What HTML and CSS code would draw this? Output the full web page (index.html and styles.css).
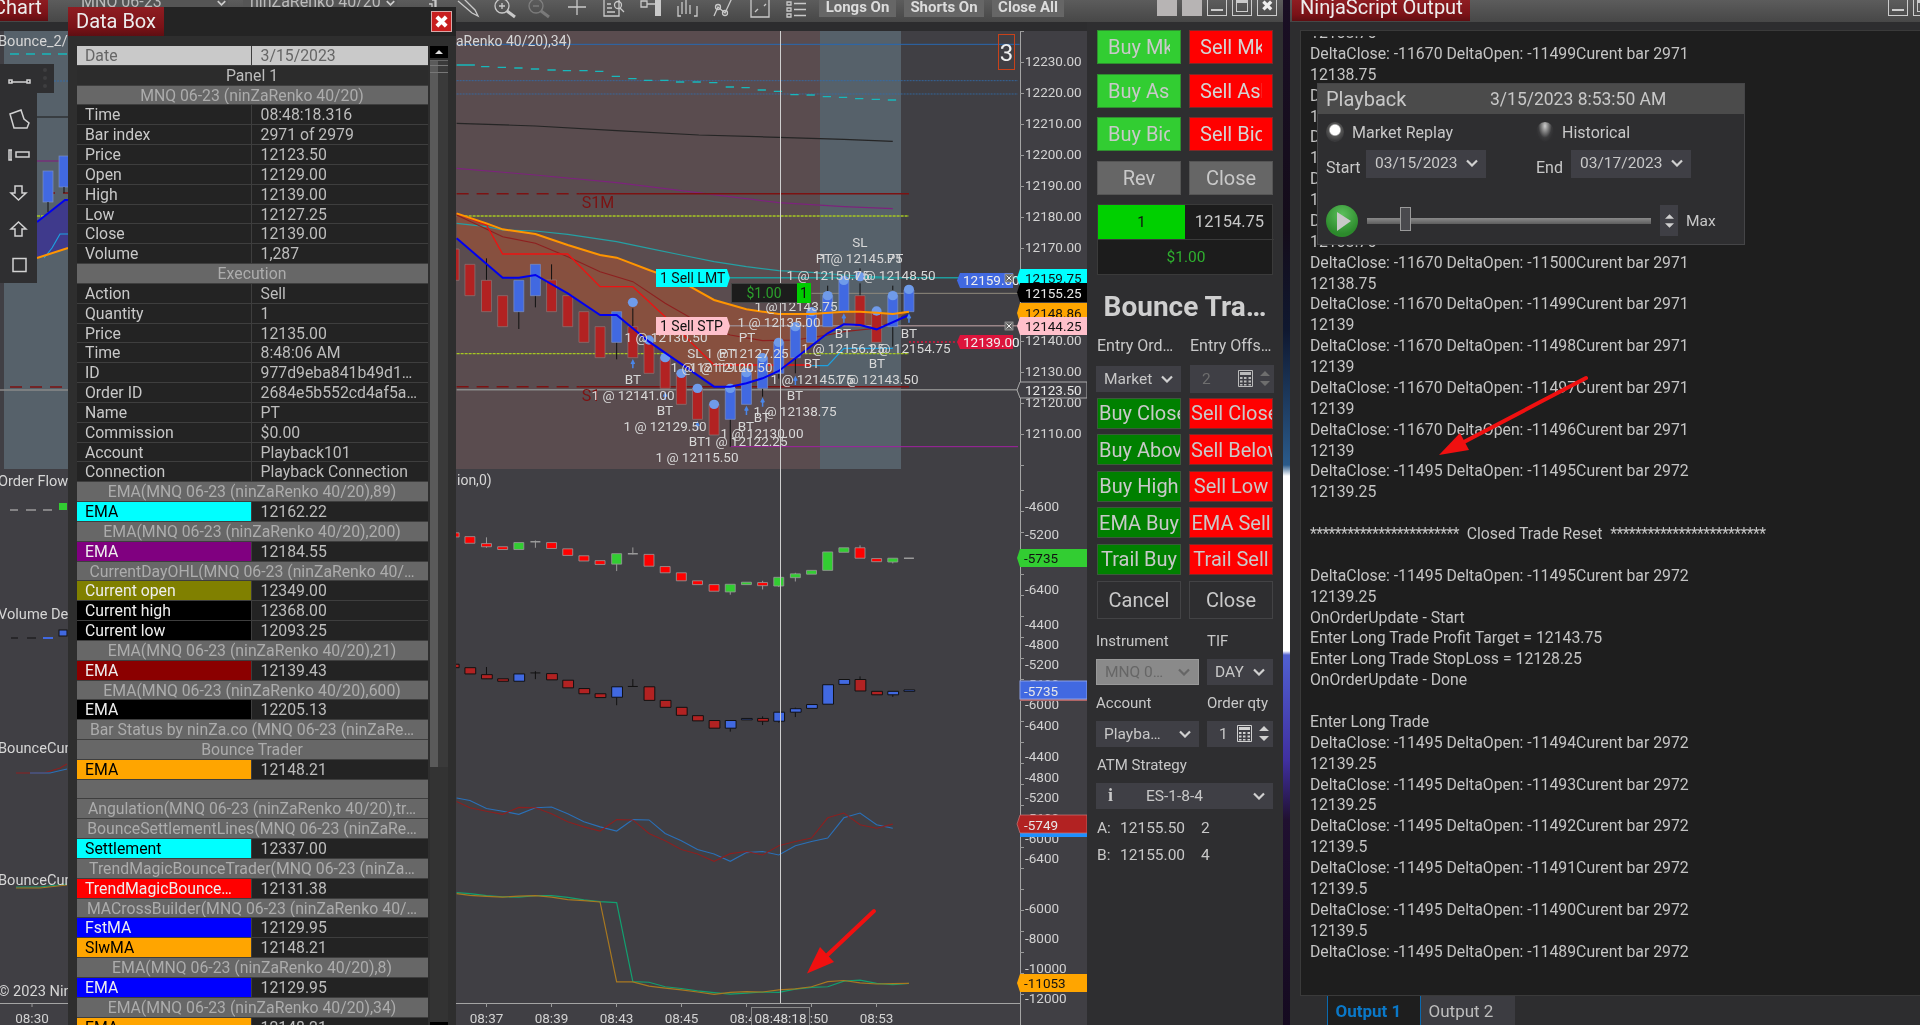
FILE: index.html
```html
<!DOCTYPE html>
<html lang="en">
<head>
<meta charset="utf-8">
<title>NinjaTrader workspace</title>
<link rel="stylesheet" href="styles.css">
</head>
<body>
<svg class="defs" width="0" height="0">
  <symbol id="chev" viewBox="0 0 12 8"><path d="M1 1.5 6 6.5 11 1.5" fill="none" stroke="currentColor" stroke-width="2.2"/></symbol>
  <symbol id="calc" viewBox="0 0 15 17"><path d="M.5.5h14v16H.5z" fill="none" stroke="currentColor"/><path d="M2 2h11v3H2zM2 7h2.5v2H2zM6 7h2.5v2H6zM10.500 7H13v2h-2.500zM2 10.500h2.500v2H2zM6 10.500h2.500v2H6zM10.500 10.500H13v2h-2.500zM2 14h2.500v1.500H2zM6 14h2.500v1.500H6zM10.500 14H13v1.500h-2.500z" fill="currentColor"/></symbol>
  <symbol id="updown" viewBox="0 0 10 17"><path d="M0 6 5 1l5 5zM0 11l5 5 5-5z" fill="currentColor"/></symbol>
</svg>
<div class="desk">
  <section class="win chart-win">
    <header class="titlebar">
      <div class="tab tab-chart"><span>Chart</span></div>
      <div class="tb-sel sel-inst">MNQ 06-23<svg class="tb-chev"><use href="#chev"/></svg></div>
      <div class="tb-sel sel-type">ninZaRenko 40/20<svg class="tb-chev"><use href="#chev"/></svg></div>
      <svg class="tb-icons" viewBox="425 0 390 22">
        <g class="ic">
          <path d="M429 4h3v13h3V0h-3M436 0v17"/>
          <path d="M458 1l14 12 6 3-3-6L462-3"/>
          <circle cx="502" cy="6" r="7"/><path d="M502 3v6M499 6h6"/><path class="ict" d="M507 11l8 6"/>
          <g class="dim"><circle cx="536" cy="6" r="7"/><path d="M533 6h6"/><path class="ict" d="M541 11l8 6"/></g>
          <path d="M577-2v17M568 7h18"/>
          <path d="M604-2h15v18h-15zM607 4h4M607 8h5M607 12h8"/><circle cx="618" cy="5" r="3.500"/><path d="M620 8l4 4"/>
          <path d="M641 1h6v6h-6zM647 4h8"/><path class="fat" d="M658-2v18"/>
          <path d="M678 6v10h3M694 16h3V6M682 14V2M686 14V-2M690 14V5" />
          <path d="M714 16l4-9 7 6 7-15"/><circle cx="718" cy="7" r="2.500"/><circle cx="725" cy="13" r="2.500"/>
          <path d="M751-1h18v18h-18zM755 12l3-3M764 6l2-2"/>
          <path d="M787 2h4v3h-4zM794 3.500h12M787 8h4v3h-4zM794 9.500h12M787 14h4v3h-4zM794 15.500h12"/>
        </g>
      </svg>
      <div class="tb-btn btn-long">Longs On</div>
      <div class="tb-btn btn-short">Shorts On</div>
      <div class="tb-btn btn-close">Close All</div>
      <div class="wc wc-solid first-wc"></div>
      <div class="wc wc-solid"></div>
      <div class="wc wc-min"></div>
      <div class="wc wc-max"></div>
      <div class="wc wc-x">✖</div>
    </header>
    <div class="chart-body">
      <svg class="chart" width="1087" height="1003" viewBox="0 22 1087 1003">
        <rect class="gap" x="0" y="22" width="1087" height="9"/>
        <rect class="zone-s" x="4" y="31" width="64" height="438"/>
        <rect class="zone-b" x="456" y="31" width="364" height="438"/>
        <rect class="zone-s" x="820" y="31" width="81" height="438"/>

        <!-- left fragment of the price panel -->
        <path class="l-cy" d="M10 54H68"/>
        <path class="l-dot" d="M54 81H68"/>
        <path class="l-blk" d="M37 117H68"/>
        <path class="l-pur" d="M37 161H68"/>
        <path class="l-s" d="M43 193H68"/>
        <path class="l-yl" d="M37 216H68"/>
        <path class="l-s" d="M10 387H68"/>
        <path class="l-gr" d="M0 390H68"/>
        <path class="a-fill" d="M37 222L65 200H68V248L37 258z"/>
        <rect class="c-b" x="43" y="171" width="10" height="31"/><rect class="c-b" x="59" y="156" width="10" height="31"/>
        <path class="wick" d="M48 202V212M64 187V193"/>
        <path class="l-blu" d="M37 222L65 200H68"/>
        <path class="l-tl" d="M44 258L52 248 60 234H68"/>
        <path class="l-org" d="M37 258L68 248"/>

        <g class="main" transform="translate(450 0) scale(.41459 .33333)">
          <path class="l-blue" d="M16 133H1374"/>
          <path class="l-dot" d="M16 242H1370M16 282H1370"/>
          <path class="l-cys" d="M16 195H60M75 200H95M115 202H135M155 204H175M195 207H215M235 210H255M272 212H292M312 212H332M350 214H370M390 229H410M430 236H450M468 241H488M507 241H527M545 246H565M585 246H605M625 248H645M665 261H685M703 263H723M742 270H762M781 274H801M821 284H841M860 285H880M899 290H919M938 292H958M977 296H997M1017 298H1037M1056 300H1076"/>
          <path class="l-blk" d="M16 370L206 378 402 392 600 405 793 412 950 418 1068 424"/>
          <path class="l-pur" d="M16 505L206 525 402 548 597 578 793 608 950 620 1068 626"/>
          <path class="l-s" d="M16 581H312"/><path class="l-ss" d="M312 581H1107"/>
          <path class="l-yl" d="M16 648H1107M16 1061H1107"/>
          <path class="a-fill2" d="M16 640L88 670 127 688 206 702 284 735 362 765 402 773 480 810 558 845 637 900 715 928 793 942 872 942 950 935 989 935 1029 938 1107 935 1029 988 989 975 950 973 911 1000 833 1075 793 1113 754 1135 715 1150 676 1160 637 1160 480 1025 402 945 362 945 284 880 206 825 166 833 127 833 16 715z"/>
          <path class="l-tl2" d="M16 670L88 680 127 690 206 693 284 703 402 725 480 745 558 765 637 785 715 800 793 812 872 817 950 825 1068 833"/>
          <path class="l-dr" d="M16 645L127 710 206 730 284 770 362 815 441 845 519 910 597 965 676 1005 754 1022 833 1020 911 1005 950 995 1029 985 1107 945"/>
          <path class="l-red" d="M16 640L88 675 127 762H284L362 860H441L519 950 637 1095H872"/>
          <path class="l-sky" d="M872 1097H911L950 1045H1068"/>
          <path class="l-s" d="M16 1160H312"/><path class="l-ss" d="M312 1160H1107"/>
          <path class="l-gr" d="M16 1169H1370"/>
          <path class="l-mag" d="M676 1340H1370"/>
          <path class="l-pos1" d="M675 833H1370"/>
          <path class="l-pos2" d="M872 880H1370"/>
          <path class="l-pos3" d="M675 977H1370"/>
          <path class="l-dots" d="M1107 1026H1224"/>

          <path class="wick" d="M88 775V841M166 935V987M206 887V922M245 793V840M402 1027V1078M441 925V980M676 1258V1340M754 1165V1190M793 1120V1136M833 1073V1120M989 850V887M1068 980V1040M911 857V875M989 805V818M1068 857V870"/>
          <g class="cr">
            <rect x="-6" y="747" width="28" height="94"/><rect x="36" y="793" width="24" height="94"/><rect x="76" y="841" width="24" height="94"/><rect x="115" y="887" width="24" height="93"/><rect x="233" y="840" width="24" height="95"/><rect x="272" y="887" width="24" height="93"/><rect x="311" y="935" width="24" height="92"/><rect x="350" y="980" width="24" height="93"/><rect x="429" y="980" width="24" height="93"/><rect x="468" y="1027" width="24" height="93"/><rect x="507" y="1073" width="24" height="92"/><rect x="546" y="1120" width="24" height="93"/><rect x="585" y="1165" width="24" height="93"/><rect x="625" y="1213" width="24" height="92"/><rect x="977" y="887" width="24" height="93"/><rect x="1017" y="935" width="24" height="92"/>
          </g>
          <g class="cb">
            <rect x="154" y="841" width="24" height="94"/><rect x="194" y="793" width="24" height="94"/><rect x="390" y="935" width="24" height="92"/><rect x="664" y="1165" width="24" height="93"/><rect x="703" y="1120" width="24" height="93"/><rect x="742" y="1073" width="24" height="92"/><rect x="781" y="1027" width="24" height="93"/><rect x="821" y="980" width="24" height="93"/><rect x="860" y="935" width="24" height="92"/><rect x="899" y="887" width="24" height="93"/><rect x="938" y="841" width="24" height="94"/><rect x="1056" y="887" width="24" height="93"/><rect x="1095" y="870" width="24" height="65"/>
          </g>
          <g class="ball">
            <ellipse cx="441" cy="907" rx="12" ry="14"/><ellipse cx="480" cy="1020" rx="12" ry="14"/><ellipse cx="519" cy="1073" rx="12" ry="14"/><ellipse cx="558" cy="1120" rx="12" ry="14"/><ellipse cx="597" cy="1165" rx="12" ry="14"/><ellipse cx="637" cy="1213" rx="12" ry="14"/><ellipse cx="676" cy="1165" rx="12" ry="14"/><ellipse cx="715" cy="1118" rx="12" ry="14"/><ellipse cx="754" cy="1073" rx="12" ry="14"/><ellipse cx="793" cy="1027" rx="12" ry="14"/><ellipse cx="833" cy="980" rx="12" ry="14"/><ellipse cx="872" cy="935" rx="12" ry="14"/><ellipse cx="911" cy="887" rx="12" ry="14"/><ellipse cx="950" cy="841" rx="12" ry="14"/><ellipse cx="989" cy="830" rx="12" ry="14"/><ellipse cx="1029" cy="933" rx="12" ry="14"/><ellipse cx="1068" cy="887" rx="12" ry="14"/><ellipse cx="1107" cy="868" rx="12" ry="14"/>
          </g>
          <path class="l-org" d="M16 640L88 670 127 688 206 702 284 735 362 765 402 773 480 810 558 845 637 900 715 928 793 942 872 942 950 935 989 935 1029 938 1068 942 1107 935"/>
          <path class="l-blu" d="M16 715L127 833H166L206 825 284 880 362 945H402L480 1025 637 1160H676L715 1150 754 1135 793 1113 833 1075 911 1000 950 973 989 975 1029 988 1107 945"/>
          <path class="arr" d="M441 1105V1082M437 1092L441 1082 445 1092M519 1200V1180M515 1190L519 1180 523 1190M597 1290V1268M593 1278L597 1268 601 1278M715 1245V1222M711 1232L715 1222 719 1232M754 1220V1197M750 1207L754 1197 758 1207M833 1155V1132M829 1142L833 1132 837 1142M950 968V945M946 955L950 945 954 955M1107 968V945M1103 955L1107 945 1111 955"/>
        </g>

        <g class="ind" transform="translate(450 480) scale(.41459 .34758)">
          <path class="t-wick" d="M88 165V195M206 174V195M402 242V262M441 194V214M676 322V330M754 290V315M793 305V308M833 267V292M989 188V196M1068 236V240"/>
          <g class="cr2"><rect x="4" y="152" width="18" height="12"/><rect x="36" y="163" width="24" height="19"/><rect x="76" y="183" width="24" height="9"/><rect x="115" y="192" width="24" height="8"/><rect x="233" y="180" width="24" height="17"/><rect x="272" y="198" width="24" height="19"/><rect x="311" y="218" width="24" height="15"/><rect x="350" y="232" width="24" height="11"/><rect x="468" y="214" width="24" height="34"/><rect x="507" y="249" width="24" height="18"/><rect x="546" y="267" width="24" height="23"/><rect x="585" y="290" width="24" height="11"/><rect x="625" y="301" width="24" height="19"/><rect x="742" y="295" width="24" height="9"/><rect x="977" y="195" width="24" height="30"/><rect x="1017" y="226" width="24" height="9"/></g>
          <g class="cg2"><rect x="154" y="180" width="24" height="20"/><rect x="390" y="212" width="24" height="30"/><rect x="664" y="300" width="24" height="22"/><rect x="703" y="294" width="24" height="7"/><rect x="781" y="280" width="24" height="25"/><rect x="821" y="270" width="24" height="11"/><rect x="860" y="260" width="24" height="11"/><rect x="899" y="207" width="24" height="53"/><rect x="938" y="195" width="24" height="13"/><rect x="1056" y="225" width="24" height="11"/></g>
          <path class="t-flat" d="M194 178H218M429 212H453M1095 225H1119"/>

          <path class="wick" d="M88 538V572M206 550V573M402 625V648M441 573V594M676 714V724M754 680V705M793 694V698M833 655V682M989 565V574M1068 618V624"/>
          <g class="cr3"><rect x="4" y="530" width="18" height="10"/><rect x="36" y="540" width="26" height="18"/><rect x="76" y="560" width="26" height="12"/><rect x="115" y="572" width="26" height="7"/><rect x="233" y="557" width="26" height="18"/><rect x="272" y="576" width="26" height="22"/><rect x="311" y="600" width="26" height="15"/><rect x="350" y="615" width="26" height="11"/><rect x="468" y="595" width="26" height="39"/><rect x="507" y="634" width="26" height="20"/><rect x="546" y="654" width="26" height="23"/><rect x="585" y="678" width="26" height="15"/><rect x="625" y="692" width="26" height="22"/><rect x="742" y="686" width="26" height="8"/><rect x="977" y="574" width="26" height="33"/><rect x="1017" y="608" width="26" height="10"/></g>
          <g class="cb3"><rect x="154" y="558" width="26" height="21"/><rect x="390" y="595" width="26" height="30"/><rect x="664" y="692" width="26" height="22"/><rect x="703" y="686" width="26" height="4"/><rect x="781" y="668" width="26" height="26"/><rect x="821" y="658" width="26" height="10"/><rect x="860" y="646" width="26" height="11"/><rect x="899" y="589" width="26" height="56"/><rect x="938" y="574" width="26" height="14"/><rect x="1056" y="608" width="26" height="10"/><rect x="1095" y="604" width="26" height="4"/></g>
          <path class="wick" d="M194 555H218M429 594H453"/>

          <path class="ln-b" d="M16 915L48 922 88 945 127 953 166 962 206 943 245 941 284 960 323 983 362 998 402 1010 441 977 480 978 519 1017 558 1038 597 1063 637 1076 676 1097 715 1072 754 1069 793 1079 833 1052 872 1040 911 1030 950 972 989 958 1029 992 1068 1002"/>
          <path class="ln-r" d="M16 925L48 943 88 953 127 962 166 942 206 943 245 960 284 983 323 998 362 1010 402 977 441 978 480 1017 519 1038 558 1063 597 1076 637 1097 676 1075 715 1069 754 1079 793 1052 833 1040 872 1030 911 972 950 958 989 992 1029 1002 1068 990"/>

          <path class="ln-g" d="M16 1187L48 1190 88 1196 127 1199 166 1200 206 1196 245 1196 284 1201 323 1208 362 1213 402 1216 441 1443 480 1445 519 1458 558 1463 597 1470 637 1475 676 1479 715 1476 754 1473 793 1474 833 1465 872 1460 911 1458 950 1442 989 1439 1029 1448 1068 1452 1107 1448"/>
          <path class="ln-o" d="M16 1190L48 1195 88 1198 127 1200 166 1197 206 1196 245 1200 284 1207 323 1210 362 1214 402 1444 441 1444 480 1456 519 1462 558 1467 597 1473 637 1480 676 1474 715 1472 754 1473 793 1467 833 1464 872 1458 911 1443 950 1440 989 1447 1029 1450 1068 1449 1107 1448"/>
        </g>

        <!-- left fragments of lower panels -->
        <path class="t-flat" d="M10 510H18M26 510H36M43 510H52"/><rect class="cg2" x="59" y="503" width="8" height="7"/>
        <path class="wick" d="M11 638H18M27 638H36"/><path class="l-dash-b" d="M43 638H53"/><rect class="cb3" x="59" y="630" width="8" height="6"/>
        <path class="ln-r" d="M16 773H44L60 768 67 764"/><path class="ln-b" d="M30 773H50L67 769"/>
        <path class="ln-g" d="M16 887H40L67 884"/><path class="ln-o" d="M16 888H40L67 885"/>

        <!-- crosshair, axes, ticks -->
        <path class="cross" d="M780.500 31V1003"/>
        <path class="axis" d="M1020.500 31V1025M0 1003.500H1020"/>
        <path class="ticks" d="M1022 31V470"/>
        <path class="ticks2" d="M1022 490V1000"/>
        <path class="ticks3" d="M32 1003V1007M486.500 1003V1007M551.500 1003V1007M616.500 1003V1007M681.500 1003V1007M746.500 1003V1007M811.500 1003V1007M876.500 1003V1007"/>

        <!-- chart labels -->
        <text class="lab" x="-2" y="46">Bounce_2/B</text>
        <text class="lab" x="-2" y="486">Order Flow</text>
        <text class="lab" x="-2" y="619">Volume Del</text>
        <text class="lab" x="-2" y="753">BounceCum</text>
        <text class="lab" x="-2" y="885">BounceCum</text>
        <text class="lab" x="-2" y="996">© 2023 Ninj</text>
        <text class="lab2" x="456" y="46">aRenko 40/20),34)</text>
        <text class="lab2" x="457" y="485">ion,0)</text>
        <text class="s-lab" x="598" y="208">S1M</text>
        <text class="s-lab" x="591" y="401">S1</text>

        <g class="note">
          <text x="860" y="247">SL</text><text x="861" y="263">1 @ 12145.75</text><text x="824" y="263">PT</text><text x="895" y="263">PT</text>
          <text x="828" y="280">1 @ 12150.75</text><text x="894" y="280">1 @ 12148.50</text>
          <text x="796" y="311">1 @ 12143.75</text><text x="779" y="327">1 @ 12135.00</text>
          <text x="666" y="342">1 @ 12130.50</text><text x="747" y="342">PT</text>
          <text x="843" y="338">BT</text><text x="909" y="338">BT</text>
          <text x="843" y="353">1 @ 12156.25</text><text x="909" y="353">1 @ 12154.75</text>
          <text x="695" y="358">SL</text><text x="747" y="358">1 @ 12127.25</text><text x="727" y="358">PT</text>
          <text x="731" y="372">1 @ 12120.50</text><text x="712" y="372">1 @ 12119.00</text>
          <text x="812" y="368">BT</text><text x="877" y="368">BT</text>
          <text x="633" y="384">BT</text><text x="812" y="384">1 @ 12145.75</text><text x="877" y="384">1 @ 12143.50</text>
          <text x="633" y="400">1 @ 12141.00</text><text x="795" y="400">BT</text>
          <text x="665" y="415">BT</text><text x="795" y="416">1 @ 12138.75</text>
          <text x="762" y="422">BT</text><text x="746" y="431">BT</text><text x="665" y="431">1 @ 12129.50</text>
          <text x="762" y="438">1 @ 12130.00</text>
          <text x="697" y="446">BT</text><text x="746" y="446">1 @ 12122.25</text>
          <text x="697" y="462">1 @ 12115.50</text>
        </g>

        <!-- order tags -->
        <path class="tag-cy" d="M656 269H727L730 278 727 287H656z"/><text class="tag-t" x="660" y="283">1 Sell LMT</text>
        <path class="tag-pk" d="M656 317H727L730 326 727 335H656z"/><text class="tag-t" x="660" y="331">1 Sell STP</text>
        <rect class="pnl" x="731.500" y="283.500" width="66" height="19"/><text class="pnl-t" x="764" y="298">$1.00</text>
        <rect class="pnl-g" x="797" y="283" width="14" height="20"/><text class="pnl-k" x="804" y="298">1</text>

        <!-- counter -->
        <rect class="count" x="998.500" y="34.500" width="16" height="35"/><text class="count-t" x="1006.500" y="61">3</text>

        <!-- price axis text -->
        <g class="ax" transform="translate(1025 0)">
          <text y="66">12230.00</text><text y="97">12220.00</text><text y="128">12210.00</text><text y="159">12200.00</text><text y="190">12190.00</text><text y="221">12180.00</text><text y="252">12170.00</text><text y="345">12140.00</text><text y="376">12130.00</text><text y="407">12120.00</text><text y="438">12110.00</text>
          <text y="511">-4600</text><text y="539">-5200</text><text y="594">-6400</text>
          <text y="629">-4400</text><text y="649">-4800</text><text y="669">-5200</text><text y="689">-5600</text><text y="709">-6000</text><text y="730">-6400</text>
          <text y="761">-4400</text><text y="782">-4800</text><text y="802">-5200</text><text y="823">-5600</text><text y="843">-6000</text><text y="863">-6400</text>
          <text y="913">-6000</text><text y="943">-8000</text><text y="973">-10000</text><text y="1003">-12000</text>
        </g>
        <g class="tm">
          <text x="32" y="1023">08:30</text><text x="486.500" y="1023">08:37</text><text x="551.500" y="1023">08:39</text><text x="616.500" y="1023">08:43</text><text x="681.500" y="1023">08:45</text><text x="746.500" y="1023">08:47</text><text x="811.500" y="1023">08:50</text><text x="876.500" y="1023">08:53</text>
        </g>
        <rect class="tbox" x="751.500" y="1007.500" width="58" height="20"/>
        <text class="tm-t" x="780.500" y="1023">08:48:18</text>

        <!-- price markers -->
        <path class="m-blue" d="M960 273H1013V288H960L957 280.500z"/><text class="m-w" x="963" y="285">12159.00</text>
        <rect class="xbox" x="1005" y="274" width="8" height="8"/><path class="xx" d="M1006.500 275.500L1011.500 280.500M1011.500 275.500L1006.500 280.500"/>
        <path class="m-crim" d="M960 335H1013V349H960L957 342z"/><text class="m-w" x="963" y="347">12139.00</text>
        <rect class="xbox" x="1005" y="322" width="8" height="8"/><path class="xx" d="M1006.500 323.500L1011.500 328.500M1011.500 323.500L1006.500 328.500"/>

        <path class="m-cy" d="M1020 269H1087V287H1020L1017 278z"/><text class="m-k" x="1025" y="283">12159.75</text>
        <path class="m-blk" d="M1020 283H1087V302H1020L1017 292.500z"/><text class="m-wh" x="1025" y="298">12155.25</text>
        <path class="m-or" d="M1020 303H1087V323H1020L1017 313z"/><text class="m-k" x="1025" y="318">12148.86</text>
        <path class="m-pk" d="M1020 317H1087V335H1020L1017 326z"/><text class="m-k" x="1025" y="331">12144.25</text>
        <path class="m-out" d="M1020 382H1087V398H1020L1017 390z"/><text class="m-wh" x="1025" y="395">12123.50</text>

        <path class="m-grn" d="M1020 549H1087V567H1020L1017 558z"/><text class="m-k" x="1024" y="563">-5735</text>
        <rect class="m-rline" x="1020" y="698" width="67" height="3"/>
        <rect class="m-bl" x="1020" y="681" width="67" height="18"/><text class="m-wh" x="1024" y="696">-5735</text>
        <rect class="m-sky" x="1020" y="832" width="67" height="5"/>
        <path class="m-red" d="M1020 815H1087V833H1020L1017 824z"/><text class="m-wh" x="1024" y="830">-5749</text>
        <path class="m-or" d="M1020 974H1087V992H1020L1017 983z"/><text class="m-k" x="1024" y="988">-11053</text>

        <!-- red annotation arrow -->
        <path class="red-arrow" d="M874 911L820 962"/>
        <path class="red-head" d="M807 973.600L820 947 834 962z"/>

        <!-- drawing tools -->
        <rect class="dt" x="0" y="64" width="37" height="219"/>
        <rect class="dt" x="37" y="64" width="17" height="29"/>
        <g class="dots"><circle cx="45" cy="70" r="2"/><circle cx="45" cy="78" r="2"/><circle cx="45" cy="86" r="2"/></g>
        <g class="dt-ic">
          <path d="M11 82H27M9 80h3v3H9zM27 80h3v3h-3z"/>
          <path d="M10 114L21 110 24 119 29 123 27 128H14z"/>
          <path d="M12 150H9v10h3M11 150V160M16 152h13v5H16z"/>
          <path d="M15 186h7v7h4l-7.500 7-7.500-7h4z"/>
          <path d="M18.500 222l7.500 7h-4v7h-7v-7h-4z"/>
          <rect x="13" y="258.500" width="13" height="13"/>
        </g>
      </svg>
      <aside class="side">
        <div class="btns">
          <button class="b b-lime"><span>Buy Mkt</span></button><button class="b b-red"><span>Sell Mkt</span></button>
          <button class="b b-lime"><span>Buy Ask</span></button><button class="b b-red"><span>Sell Ask</span></button>
          <button class="b b-lime"><span>Buy Bid</span></button><button class="b b-red"><span>Sell Bid</span></button>
          <button class="b b-gray"><span>Rev</span></button><button class="b b-gray"><span>Close</span></button>
        </div>
        <div class="pos">
          <div class="pos-qty">1</div><div class="pos-price">12154.75</div>
          <div class="pos-pnl">$1.00</div>
        </div>
        <div class="side-title">Bounce Tra…</div>
        <div class="two lbls"><span>Entry Ord…</span><span>Entry Offs…</span></div>
        <div class="two f1">
          <div class="sel">Market<svg class="chev"><use href="#chev"/></svg></div>
          <div class="num dis"><span>2</span><svg class="calc"><use href="#calc"/></svg><svg class="ud"><use href="#updown"/></svg></div>
        </div>
        <div class="btns2">
          <button class="b2 g">Buy Close</button><button class="b2 r">Sell Close</button>
          <button class="b2 g">Buy Above</button><button class="b2 r">Sell Below</button>
          <button class="b2 g c">Buy High</button><button class="b2 r c">Sell Low</button>
          <button class="b2 g c">EMA Buy</button><button class="b2 r c">EMA Sell</button>
          <button class="b2 g c">Trail Buy</button><button class="b2 r c">Trail Sell</button>
        </div>
        <div class="two cancel"><button class="b3">Cancel</button><button class="b3">Close</button></div>
        <div class="wide lbl2"><span>Instrument</span><span>TIF</span></div>
        <div class="wide f2">
          <div class="sel sel-off">MNQ 0…<svg class="chev"><use href="#chev"/></svg></div>
          <div class="sel">DAY<svg class="chev"><use href="#chev"/></svg></div>
        </div>
        <div class="wide lbl2"><span>Account</span><span>Order qty</span></div>
        <div class="wide f2">
          <div class="sel">Playba…<svg class="chev"><use href="#chev"/></svg></div>
          <div class="num"><span>1</span><svg class="calc"><use href="#calc"/></svg><svg class="ud"><use href="#updown"/></svg></div>
        </div>
        <div class="lbl2">ATM Strategy</div>
        <div class="sel sel-atm f2"><b class="info">i</b><span>ES-1-8-4</span><svg class="chev"><use href="#chev"/></svg></div>
        <div class="ab ab-a"><span>A:</span><span>12155.50</span><span>2</span></div>
        <div class="ab ab-b"><span>B:</span><span>12155.00</span><span>4</span></div>
      </aside>
    </div>
  </section>

  <div class="strip"></div>

  <section class="win out-win">
    <header class="titlebar out-bar">
      <div class="tab tab-out"><span>NinjaScript Output</span></div>
      <div class="wc wc-min out-min"></div>
      <div class="wc wc-max"></div>
    </header>
    <div class="out-text">
      <div class="out-scroll">
        <p>12138.75</p>
        <p>DeltaClose: -11670 DeltaOpen: -11499Curent bar 2971</p><p>12138.75</p>
        <p>DeltaClose: -11670 DeltaOpen: -11504Curent bar 2971</p><p>12138.75</p>
        <p>DeltaClose: -11670 DeltaOpen: -11503Curent bar 2971</p><p>12138.75</p>
        <p>DeltaClose: -11670 DeltaOpen: -11502Curent bar 2971</p><p>12138.75</p>
        <p>DeltaClose: -11670 DeltaOpen: -11501Curent bar 2971</p><p>12138.75</p>
        <p>DeltaClose: -11670 DeltaOpen: -11500Curent bar 2971</p><p>12138.75</p>
        <p>DeltaClose: -11670 DeltaOpen: -11499Curent bar 2971</p><p>12139</p>
        <p>DeltaClose: -11670 DeltaOpen: -11498Curent bar 2971</p><p>12139</p>
        <p>DeltaClose: -11670 DeltaOpen: -11497Curent bar 2971</p><p>12139</p>
        <p>DeltaClose: -11670 DeltaOpen: -11496Curent bar 2971</p><p>12139</p>
        <p>DeltaClose: -11495 DeltaOpen: -11495Curent bar 2972</p><p>12139.25</p>
        <p>&nbsp;</p>
        <p><span class="stars">************************</span>&nbsp; Closed Trade Reset&nbsp; <span class="stars">*************************</span></p>
        <p>&nbsp;</p>
        <p>DeltaClose: -11495 DeltaOpen: -11495Curent bar 2972</p><p>12139.25</p>
        <p>OnOrderUpdate - Start</p>
        <p>Enter Long Trade Profit Target = 12143.75</p>
        <p>Enter Long Trade StopLoss = 12128.25</p>
        <p>OnOrderUpdate - Done</p>
        <p>&nbsp;</p>
        <p>Enter Long Trade</p>
        <p>DeltaClose: -11495 DeltaOpen: -11494Curent bar 2972</p><p>12139.25</p>
        <p>DeltaClose: -11495 DeltaOpen: -11493Curent bar 2972</p><p>12139.25</p>
        <p>DeltaClose: -11495 DeltaOpen: -11492Curent bar 2972</p><p>12139.5</p>
        <p>DeltaClose: -11495 DeltaOpen: -11491Curent bar 2972</p><p>12139.5</p>
        <p>DeltaClose: -11495 DeltaOpen: -11490Curent bar 2972</p><p>12139.5</p>
        <p>DeltaClose: -11495 DeltaOpen: -11489Curent bar 2972</p>
      </div>
    </div>
    <nav class="out-tabs"><div class="otab on">Output 1</div><div class="otab">Output 2</div></nav>
  </section>

  <svg class="out-arrow" width="170" height="100" viewBox="1430 370 170 100">
    <path class="red-arrow" d="M1586 378L1462 443"/>
    <path class="red-head" d="M1439 455L1469 450 1460 433z"/>
  </svg>

  <section class="win playback">
    <header class="pb-title"><span class="pb-name">Playback</span><span class="pb-date">3/15/2023 8:53:50 AM</span></header>
    <div class="pb-grid">
      <label class="pb-radio"><i class="radio on"></i>Market Replay</label>
      <label class="pb-radio"><i class="radio"></i>Historical</label>
      <div class="pb-date-row"><span class="pb-l pb-start">Start</span><div class="pb-sel">03/15/2023<svg class="chev"><use href="#chev"/></svg></div></div>
      <div class="pb-date-row"><span class="pb-l pb-end">End</span><div class="pb-sel">03/17/2023<svg class="chev"><use href="#chev"/></svg></div></div>
    </div>
    <div class="pb-controls">
      <div class="play"><svg viewBox="0 0 32 32" width="32" height="32"><path d="M11 7 25 16 11 26z" fill="#c9c9c9"/></svg></div>
      <div class="slider"><div class="thumb"></div></div>
      <div class="spin"><svg class="ud2"><use href="#updown"/></svg></div>
      <span class="pb-max">Max</span>
    </div>
  </section>

  <section class="win databox">
    <header class="db-title">
      <div class="tab tab-db"><span>Data Box</span></div>
      <div class="db-x">✖</div>
    </header>
    <div class="db-body">
      <div class="grid">
        <div class="k date">Date</div><div class="v date">3/15/2023</div>
        <div class="h panel">Panel 1</div>
        <div class="h">MNQ 06-23 (ninZaRenko 40/20)</div>
        <div class="k">Time</div><div class="v">08:48:18.316</div>
        <div class="k">Bar index</div><div class="v">2971 of 2979</div>
        <div class="k">Price</div><div class="v">12123.50</div>
        <div class="k">Open</div><div class="v">12129.00</div>
        <div class="k">High</div><div class="v">12139.00</div>
        <div class="k">Low</div><div class="v">12127.25</div>
        <div class="k">Close</div><div class="v">12139.00</div>
        <div class="k">Volume</div><div class="v">1,287</div>
        <div class="h">Execution</div>
        <div class="k">Action</div><div class="v">Sell</div>
        <div class="k">Quantity</div><div class="v">1</div>
        <div class="k">Price</div><div class="v">12135.00</div>
        <div class="k">Time</div><div class="v">8:48:06 AM</div>
        <div class="k">ID</div><div class="v">977d9eba841b49d1…</div>
        <div class="k">Order ID</div><div class="v">2684e5b552cd4af5a…</div>
        <div class="k">Name</div><div class="v">PT</div>
        <div class="k">Commission</div><div class="v">$0.00</div>
        <div class="k">Account</div><div class="v">Playback101</div>
        <div class="k">Connection</div><div class="v">Playback Connection</div>
        <div class="h">EMA(MNQ 06-23 (ninZaRenko 40/20),89)</div>
        <div class="k cyan">EMA</div><div class="v">12162.22</div>
        <div class="h">EMA(MNQ 06-23 (ninZaRenko 40/20),200)</div>
        <div class="k purple">EMA</div><div class="v">12184.55</div>
        <div class="h">CurrentDayOHL(MNQ 06-23 (ninZaRenko 40/…</div>
        <div class="k olive">Current open</div><div class="v">12349.00</div>
        <div class="k black">Current high</div><div class="v">12368.00</div>
        <div class="k black">Current low</div><div class="v">12093.25</div>
        <div class="h">EMA(MNQ 06-23 (ninZaRenko 40/20),21)</div>
        <div class="k dred">EMA</div><div class="v">12139.43</div>
        <div class="h">EMA(MNQ 06-23 (ninZaRenko 40/20),600)</div>
        <div class="k black">EMA</div><div class="v">12205.13</div>
        <div class="h">Bar Status by ninZa.co (MNQ 06-23 (ninZaRe…</div>
        <div class="h">Bounce Trader</div>
        <div class="k orange">EMA</div><div class="v">12148.21</div>
        <div class="h">&nbsp;</div>
        <div class="h">Angulation(MNQ 06-23 (ninZaRenko 40/20),tr…</div>
        <div class="h">BounceSettlementLines(MNQ 06-23 (ninZaRe…</div>
        <div class="k cyan">Settlement</div><div class="v">12337.00</div>
        <div class="h">TrendMagicBounceTrader(MNQ 06-23 (ninZa…</div>
        <div class="k red">TrendMagicBounce…</div><div class="v">12131.38</div>
        <div class="h">MACrossBuilder(MNQ 06-23 (ninZaRenko 40/…</div>
        <div class="k blue">FstMA</div><div class="v">12129.95</div>
        <div class="k orange">SlwMA</div><div class="v">12148.21</div>
        <div class="h">EMA(MNQ 06-23 (ninZaRenko 40/20),8)</div>
        <div class="k blue">EMA</div><div class="v">12129.95</div>
        <div class="h">EMA(MNQ 06-23 (ninZaRenko 40/20),34)</div>
        <div class="k orange">EMA</div><div class="v">12148.21</div>
      </div>
      <div class="sbar">
        <div class="sb-btn"><svg width="8" height="4" viewBox="0 0 8 4"><path d="M0 4 4 0l4 4z" fill="#ddd"/></svg></div>
        <div class="sb-track"><div class="sb-thumb"></div></div>
        <div class="sb-rest"></div>
        <div class="sb-btn sb-btm"></div>
      </div>
    </div>
  </section>
</div>
</body>
</html>
```

FILE: styles.css
```css
* { box-sizing: border-box; }
html, body { margin: 0; padding: 0; height: 100%; background: #140c1a; overflow: hidden; }
body { font-family: Roboto, "Liberation Sans", sans-serif; color: #c8c8c8; }
.defs { position: absolute; }
.desk { position: relative; width: 1920px; height: 1025px; display: flex; overflow: hidden; filter: blur(.35px); }
.win { overflow: hidden; }

/* title bars */
.titlebar { height: 22px; display: flex; align-items: flex-start; background: linear-gradient(#5c5c5c, #474747); flex: none; overflow: hidden; }
.tab { color: #ededed; font-size: 20px; background: linear-gradient(#8f1d22, #7a1217 70%, #5f0e12); white-space: nowrap; overflow: hidden; flex: none; }
.tab span { display: block; line-height: 14px; margin-top: 0; }
.tab-chart { width: 48px; height: 21px; }
.tab-chart span { margin-left: -7px; }
.tb-sel { height: 7px; font-size: 16px; line-height: 4px; color: #bbb; background: #555; display: flex; justify-content: space-between; overflow: hidden; flex: none; }
.sel-inst { width: 148px; margin-left: 32px; padding-left: 1px; }
.sel-type { width: 154px; margin-left: 15px; padding-left: 7px; }
.tb-chev { width: 13px; height: 6px; color: #ccc; flex: none; }
.tb-icons { width: 390px; height: 22px; margin-left: 28px; flex: none; }
.ic { fill: none; stroke: #c9c9c9; stroke-width: 1.3; }
.ic .ict { stroke-width: 3; }
.ic .fat { stroke-width: 6; }
.ic .dim { opacity: .35; }
.tb-btn { height: 17px; background: #666; color: #dcdcdc; font-size: 15px; font-weight: 700; line-height: 14px; text-align: center; flex: none; white-space: nowrap; }
.btn-long { width: 77px; margin-left: 4px; }
.btn-short { width: 80px; margin-left: 8px; }
.btn-close { width: 72px; margin-left: 8px; }
.wc { width: 20px; height: 16px; margin-left: 5px; border: 1.500px solid #ccc; border-top: 0; position: relative; color: #eee; flex: none; }
.first-wc { margin-left: 93px; }
.wc-solid { background: #b7b4b4; border: 0; }
.wc-min::after { content: ""; position: absolute; left: 3px; right: 3px; bottom: 4px; border-bottom: 2px solid #ccc; }
.wc-max::after { content: ""; position: absolute; left: 3px; right: 3px; top: 0; bottom: 3px; border: 1.500px solid #ccc; border-top-width: 3px; }
.wc-x { font-size: 15px; line-height: 12px; text-align: center; }

/* chart window */
.chart-win { width: 1283px; height: 1025px; display: flex; flex-direction: column; flex: none; background: #2e2e30; }
.chart-body { display: flex; flex: 1; min-height: 0; }
.chart { display: block; flex: none; background: #403f44; font-family: Roboto, "Liberation Sans", sans-serif; }
.gap { fill: #2c2c2e; }
.zone-b { fill: #5a4c4f; }
.zone-s { fill: #56616a; }
.main path, .ind path, .main rect, .ind rect, .main ellipse { vector-effect: non-scaling-stroke; }
.chart path { fill: none; }
.l-blue { stroke: #2868b0; stroke-width: 1; }
.l-dot { stroke: #2f6db0; stroke-width: 1; stroke-dasharray: 2 1; opacity: .8; }
.l-cy { stroke: #17b8bc; stroke-width: 1.400; stroke-dasharray: 9 7; }
.l-cys { stroke: #17b8bc; stroke-width: 1.400; }
.l-blk { stroke: #252525; stroke-width: 1.200; }
.l-pur { stroke: #7d237d; stroke-width: 1.200; }
.l-s { stroke: #7c1212; stroke-width: 1.500; stroke-dasharray: 12 8; }
.l-ss { stroke: #7c1212; stroke-width: 1.500; }
.l-yl { stroke: #a6c822; stroke-width: 1.300; stroke-dasharray: 3 1; }
.chart .a-fill { fill: #3f3a8c; }
.chart .a-fill2 { fill: #87503f; }
.l-tl { stroke: #1da1e0; stroke-width: 1.200; }
.l-tl2 { stroke: #25a0a4; stroke-width: 1.200; }
.l-dr { stroke: #8e1f1f; stroke-width: 1.100; }
.l-red { stroke: #ee1212; stroke-width: 1.300; }
.l-sky { stroke: #1da1e0; stroke-width: 1.300; }
.l-gr { stroke: #8a8a8a; stroke-width: 1.500; }
.l-mag { stroke: #a020a0; stroke-width: 1; }
.l-pos1 { stroke: #1f9d9d; stroke-width: 1.500; }
.l-pos2 { stroke: #8f8a7c; stroke-width: 1; }
.l-pos3 { stroke: #9a8688; stroke-width: 1.500; }
.l-dots { stroke: #dc143c; stroke-width: 1.500; stroke-dasharray: 2 2; }
.l-org { stroke: #ff9500; stroke-width: 2; }
.l-blu { stroke: #0000f0; stroke-width: 2; }
.wick { stroke: #111; stroke-width: 1; }
.chart .wick { fill: none; }
.c-b, .cb rect { fill: #4169e1; stroke: #7b8fc4; stroke-width: .7; }
.cr rect { fill: #b22222; stroke: #8d7575; stroke-width: .7; }
.ball { fill: #6f9bea; }
.arr { stroke: #4a86e8; stroke-width: 1.500; }
.t-wick, .t-flat { stroke: #9a9a9a; stroke-width: 1; }
.t-flat { stroke-width: 1.500; }
.cr2 rect, .cg2 rect { stroke: #9a9a9a; stroke-width: .8; }
.cr2 rect { fill: #ff0000; }
.cg2 rect, rect.cg2 { fill: #32cd32; }
.cr3 rect { fill: #b22222; stroke: #111; stroke-width: 1; }
.cb3 rect, rect.cb3 { fill: #4169e1; stroke: #111; stroke-width: 1; }
.l-dash-b { stroke: #4169e1; stroke-width: 2; }
.ln-b { stroke: #2a70b8; stroke-width: 1.100; }
.ln-r { stroke: #8b2020; stroke-width: 1.100; }
.ln-g { stroke: #12a070; stroke-width: 1.200; }
.ln-o { stroke: #a87820; stroke-width: 1.200; }
.cross { stroke: #cfcfcf; stroke-width: 1; }
.axis { stroke: #a4a4a4; stroke-width: 1; }
.ticks { stroke: #999; stroke-width: 4; stroke-dasharray: 1 30; }
.ticks2 { stroke: #999; stroke-width: 4; stroke-dasharray: 1 20; }
.ticks3 { stroke: #999; stroke-width: 1; }
.lab { fill: #d6d6d6; font-size: 14.600px; }
.lab2 { fill: #d6d6d6; font-size: 14px; }
.s-lab { fill: #7c1212; font-size: 16px; text-anchor: middle; }
.note text { fill: #d8d8d8; font-size: 13.500px; text-anchor: middle; }
.chart .tag-cy { fill: #00ffff; }
.chart .tag-pk { fill: #ffc0cb; }
.tag-t { fill: #111; font-size: 14px; }
.pnl { fill: #1c1c1c; stroke: #444; }
.pnl-t { fill: #2ca02c; font-size: 14px; text-anchor: middle; }
.pnl-g { fill: #00cc00; }
.pnl-k { fill: #111; font-size: 14px; text-anchor: middle; }
.count { fill: none; stroke: #c8421a; stroke-width: 1; }
.count-t { fill: #eee; font-size: 24px; text-anchor: middle; }
.ax text { fill: #d2d2d2; font-size: 13.500px; }
.tm text { fill: #d2d2d2; font-size: 13.500px; text-anchor: middle; }
.tbox { fill: #403f44; stroke: #8a8a8a; }
.tm-t { fill: #d8d8d8; font-size: 13.500px; text-anchor: middle; }
.chart .m-blue { fill: #4169e1; }
.chart .m-crim { fill: #dc143c; }
.m-w { fill: #f0f0f0; font-size: 13.500px; }
.xbox { fill: #666; stroke: #aaa; stroke-width: .7; }
.xx { stroke: #eee; stroke-width: 1; }
.chart .m-cy { fill: #00ffff; }
.chart .m-blk { fill: #000; }
.chart .m-or { fill: #ffa500; }
.chart .m-pk { fill: #ffc0cb; }
.chart .m-out { fill: #403f44; stroke: #aaa; stroke-width: 1; }
.chart .m-grn { fill: #32cd32; }
.chart .m-red { fill: #b22222; stroke: #c77; stroke-width: .7; }
.m-bl { fill: #4169e1; stroke: #8aa0e8; stroke-width: 1; }
.m-rline { fill: #b06464; }
.m-sky { fill: #1e90ff; }
.m-k { fill: #111; font-size: 13.500px; }
.m-wh { fill: #e8e8e8; font-size: 13.500px; }
.red-arrow { stroke: #f01010; stroke-width: 4; stroke-linecap: round; fill: none; }
.chart .red-head, .out-arrow .red-head { fill: #f01010; }
.dt { fill: #2f2f31; }
.dots { fill: #3e3e40; }
.dt-ic path, .dt-ic rect { fill: none; stroke: #d2d2d2; stroke-width: 1.500; }

/* side panel */
.side { width: 196px; padding: 8px 10px 0; flex: none; display: flex; flex-direction: column; font-size: 15px; background: #2e2e30; }
.btns { display: grid; grid-template-columns: 84px 84px; column-gap: 8px; row-gap: 9.500px; }
button { font-family: inherit; padding: 0; cursor: pointer; white-space: nowrap; overflow: hidden; color: #c9c9c9; }
.b { height: 34px; font-size: 20px; border: 1px solid #444; padding: 0 10px; }
.b span { display: block; overflow: hidden; text-align: left; }
.b-lime { background: #32cd32; border-color: #2f8f2f; }
.b-red { background: #ff0000; border-color: #7a2a2a; color: #d4d4d4; }
.b-gray { background: #666; border-color: #555; padding: 0; }
.b-gray span { text-align: center; }
.pos { display: grid; grid-template-columns: 87px 89px; margin-top: 9px; height: 71px; border: 1px solid #3a3a3a; background: #1c1c1c; }
.pos-qty { background: #00d000; color: #111; text-align: center; line-height: 34px; font-size: 15px; height: 34px; }
.pos-price { text-align: center; line-height: 34px; font-size: 16.500px; height: 34px; }
.pos-pnl { grid-column: 1 / 3; border-top: 1px solid #3a3a3a; color: #2fb02f; text-align: center; line-height: 34px; font-size: 15.500px; }
.side-title { margin-top: 13px; height: 38px; line-height: 38px; font-size: 28px; font-weight: 700; color: #cfcfcf; text-align: center; white-space: nowrap; }
.two { display: grid; grid-template-columns: 84px 84px; column-gap: 9px; }
.lbls { margin-top: 10px; height: 20px; line-height: 20px; font-size: 16px; white-space: nowrap; }
.f1 { margin-top: 9px; height: 28px; }
.sel { display: flex; align-items: center; justify-content: space-between; background: #3f3f45; padding: 0 8px; font-size: 15.500px; white-space: nowrap; overflow: hidden; }
.f1 .sel { margin-left: -1px; width: 85px; height: 26px; margin-top: 1px; }
.chev { width: 12px; height: 8px; color: #d0d0d0; flex: none; }
.num { display: flex; align-items: center; background: #3f3f45; padding-left: 12px; font-size: 15.500px; }
.num span { flex: 1; }
.calc { width: 15px; height: 17px; color: #d0d0d0; margin-right: 7px; flex: none; }
.ud { width: 10px; height: 17px; color: #d0d0d0; margin-right: 4px; flex: none; }
.dis { color: #6e6e6e; }
.dis .calc { color: #bbb; }
.dis .ud { color: #6e6e6e; }
.btns2 { display: grid; grid-template-columns: 84px 84px; column-gap: 8px; row-gap: 5.500px; margin-top: 5px; }
.b2 { height: 31px; font-size: 20px; border: 1px solid #444; padding: 0 0 0 1px; text-align: left; }
.b2.c { text-align: center; padding: 0; }
.g { background: #008000; border-color: #3b5a3b; }
.r { background: #ff0000; border-color: #7a2a2a; }
.cancel { margin-top: 6px; column-gap: 8px; }
.b3 { height: 38px; font-size: 20px; background: transparent; border: 1px solid #434345; }
.wide { display: grid; grid-template-columns: 103px 66px; column-gap: 8px; margin-left: -1px; }
.lbl2 { margin-top: 8px; height: 20px; line-height: 20px; font-size: 15px; white-space: nowrap; }
.cancel + .lbl2 { margin-top: 12px; }
.f2 { margin-top: 8px; height: 26px; }
.sel-off { background: #8a8a8a; color: #666; border: 1px solid #999; }
.sel-off .chev { color: #666; }
.sel-atm { justify-content: flex-start; padding-left: 12px; width: 177px; margin-left: -1px; }
.sel-atm span { flex: 1; padding-left: 28px; }
.info { font: 700 18px "Liberation Serif", serif; width: 10px; }
.ab { display: grid; grid-template-columns: 23px 81px auto; height: 20px; line-height: 20px; font-size: 15.500px; }
.ab-a { margin-top: 9px; }
.ab-b { margin-top: 7px; }

/* desktop sliver */
.strip { width: 7px; flex: none; background: linear-gradient(#1a0f24 0, #140c1a 230px, #0f1830 330px, #2a5a8a 465px, #fff 476px, #fff 651px, #5060d0 655px, #4030a0 760px, #201030 820px, #150a20 1025px); }

/* output window */
.out-win { flex: 1; height: 1025px; display: flex; flex-direction: column; background: #2d2d2f; }
.out-bar { align-items: flex-start; }
.tab-out { width: 178px; height: 21px; margin-left: 2px; padding-left: 8px; }
.out-min { margin-left: 418px; }
.out-bar .wc-max { margin-left: 5px; }
.out-text { margin: 8px 0 0 10px; flex: 1; min-height: 0; background: #1e1e1e; border: 1px solid #3a3a3a; border-right: 0; padding: 5px 0 0 9px; overflow: hidden; }
.out-scroll { height: 100%; overflow: hidden; font-size: 15.800px; color: #c4c4c4; line-height: 20.870px; }
.out-scroll p { margin: 0; white-space: nowrap; }
.out-scroll p:first-child { margin-top: -13px; }
.stars { letter-spacing: -.6px; }
.out-tabs { display: flex; height: 29px; padding-left: 36.500px; flex: none; }
.otab { width: 94px; font-size: 17px; line-height: 30px; padding-left: 8px; background: #3c3c41; color: #bdbdbd; }
.otab.on { background: #1e1e1e; color: #0a78c8; font-weight: 700; border-left: 1px solid #0a6ab0; border-right: 1px solid #0a6ab0; padding-left: 8px; }
.out-arrow { position: absolute; left: 1430px; top: 370px; }

/* playback window */
.playback { position: absolute; left: 1317px; top: 83px; width: 428px; height: 162px; background: #2e2e30; border: 1px solid #454547; display: flex; flex-direction: column; }
.pb-title { height: 30px; background: #4b4b4b; display: flex; align-items: center; padding-left: 8px; flex: none; }
.pb-name { width: 164px; font-size: 20px; color: #c8c8c8; }
.pb-date { font-size: 17.500px; color: #c8c8c8; }
.pb-grid { display: grid; grid-template-columns: 210px 210px; grid-template-rows: 36px 28px; padding-left: 8px; font-size: 16px; }
.pb-radio { display: flex; align-items: center; gap: 8px; }
.radio { width: 18px; height: 20px; border-radius: 50%; background: radial-gradient(ellipse at 50% 20%, #ccc 0, #888 24%, #3a3a3c 52%, #2f2f31 70%); flex: none; }
.radio.on { background: radial-gradient(circle at 50% 40%, #fff 0, #fff 32%, #555 42%, #3a3a3c 70%); }
.pb-date-row { display: flex; align-items: center; }
.pb-l { padding-top: 6px; }
.pb-start { width: 40px; }
.pb-end { width: 35px; }
.pb-sel { width: 120px; height: 28px; background: #3f3f45; display: flex; align-items: center; justify-content: space-between; padding: 0 8px 2px 9px; font-size: 15.500px; }
.pb-controls { display: flex; align-items: center; margin-top: 27px; padding-left: 8px; height: 31px; }
.play { width: 32px; height: 32px; border-radius: 50%; background: radial-gradient(circle at 50% 30%, #5cc05c, #2c8a2c 70%); flex: none; }
.play svg { display: block; }
.slider { position: relative; width: 284px; height: 6px; margin-left: 9px; background: linear-gradient(#8a8a8a, #5e5e5e); flex: none; }
.thumb { position: absolute; left: 33px; top: -11px; width: 11px; height: 24px; background: #4a4a4e; border: 1px solid #9a9a9a; }
.spin { width: 18px; height: 31px; margin-left: 9px; background: #3f3f45; display: flex; align-items: center; justify-content: center; flex: none; }
.ud2 { width: 9px; height: 22px; color: #d0d0d0; }
.pb-max { margin-left: 8px; font-size: 15.500px; }

/* data box */
.databox { position: absolute; left: 68px; top: 7px; width: 388px; height: 1018px; background: #2e2e2e; display: flex; flex-direction: column; }
.db-title { height: 29px; background: #242424; display: flex; align-items: flex-start; justify-content: space-between; flex: none; }
.tab-db { width: 96px; height: 29px; }
.tab-db span { padding-left: 8px; line-height: 29px; }
.db-x { width: 21px; height: 21px; margin: 4px 4px 0 0; background: #c81e1e; border: 1px solid #d8a8a8; color: #fff; font-size: 18px; line-height: 19px; text-align: center; }
.db-body { display: flex; padding: 10px 8px 0 8.500px; flex: 1; min-height: 0; overflow: hidden; }
.grid { width: 351px; flex: none; display: grid; grid-template-columns: 174.500px 175.500px; grid-auto-rows: 18.830px; gap: 1px; background: #3e3e3e; align-self: flex-start; font-size: 15.800px; }
.k, .v, .h { line-height: 20px; white-space: nowrap; overflow: hidden; }
.k, .v { background: #232323; color: #c8c8c8; }
.k { padding-left: 8.500px; }
.v { padding-left: 8.500px; color: #bdbdbd; }
.h { grid-column: 1 / 3; background: #676767; color: #acacac; text-align: center; }
.h.panel { background: #2c2c2c; color: #bdbdbd; }
.k.date, .v.date { background: #c9c9c9; color: #666; }
.k.cyan { background: #00ffff; color: #000; }
.k.purple { background: #800080; color: #eee; }
.k.olive { background: #808000; color: #eee; }
.k.black { background: #000; color: #eee; }
.k.dred { background: #8b0000; color: #eee; }
.k.orange { background: #ffa500; color: #000; }
.k.red { background: #ff0000; color: #eee; }
.k.blue { background: #0000ff; color: #eee; }
.sbar { width: 18px; margin-left: 2.500px; flex: none; display: flex; flex-direction: column; }
.sb-btn { height: 12px; background: #000; display: flex; align-items: center; justify-content: center; flex: none; }
.sb-track { height: 707px; margin-top: 2px; background: linear-gradient(90deg, #5a5a5a 0, #5a5a5a 8px, #3a3a3a 8px, #3a3a3a 100%); border-top: 1px solid #666; flex: none; }
.sb-thumb { height: 8px; width: 100%; margin-top: 4px; border-top: 1px solid #777; border-bottom: 1px solid #777; }
.sb-rest { flex: 1; background: #333; }
.sb-btm { height: 3px; }
```
